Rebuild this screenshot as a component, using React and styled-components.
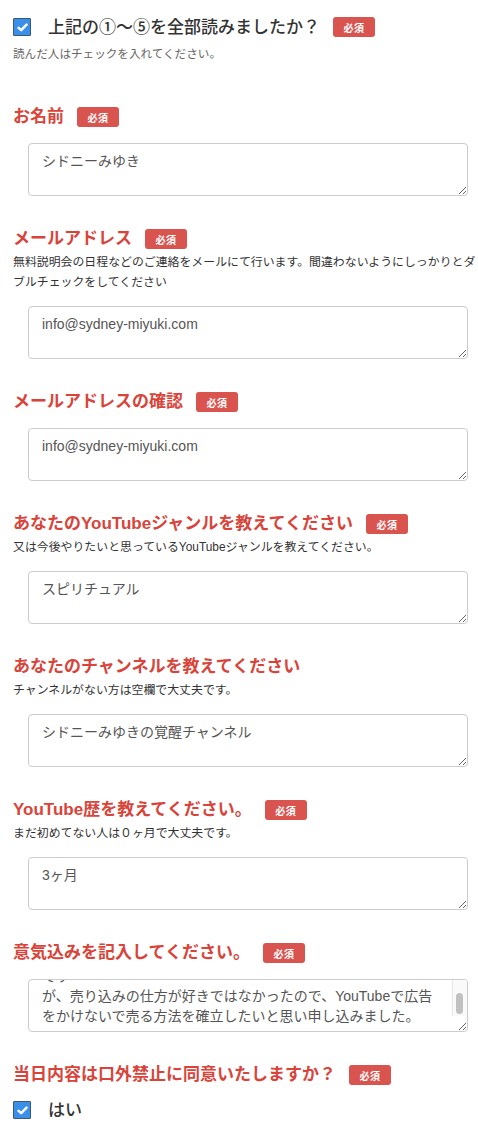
import React, { useEffect, useRef } from 'react';
import styled, { createGlobalStyle } from 'styled-components';

const GlobalStyle = createGlobalStyle`
  html, body {
    margin: 0;
    padding: 0;
    background: #fff;
  }
  body {
    font-family: "Liberation Sans", "Noto Sans CJK JP", sans-serif;
    color: #333;
  }
`;

const motivation =
  '以前から他のYouTubeコンサルタントの講座を検討していたのです\n' +
  'が、売り込みの仕方が好きではなかったので、YouTubeで広告\n' +
  'をかけないで売る方法を確立したいと思い申し込みました。';

const fields = [
  { title: 'お名前', required: true, value: 'シドニーみゆき' },
  {
    title: 'メールアドレス',
    required: true,
    desc: '無料説明会の日程などのご連絡をメールにて行います。間違わないようにしっかりとダブルチェックをしてください',
    value: 'info@sydney-miyuki.com',
  },
  { title: 'メールアドレスの確認', required: true, value: 'info@sydney-miyuki.com' },
  {
    title: 'あなたのYouTubeジャンルを教えてください',
    required: true,
    desc: '又は今後やりたいと思っているYouTubeジャンルを教えてください。',
    value: 'スピリチュアル',
  },
  {
    title: 'あなたのチャンネルを教えてください',
    desc: 'チャンネルがない方は空欄で大丈夫です。',
    value: 'シドニーみゆきの覚醒チャンネル',
  },
  {
    title: 'YouTube歴を教えてください。',
    required: true,
    desc: 'まだ初めてない人は０ヶ月で大丈夫です。',
    value: '3ヶ月',
  },
  { title: '意気込みを記入してください。', required: true, value: motivation, scrolled: true },
];

const Check = () => (
  <CheckBox>
    <svg width="11" height="9" viewBox="0 0 11 9">
      <path d="M1.5 4.8 L4.2 7.2 L9.6 1.6" fill="none" stroke="#fff" strokeWidth="2.4" strokeLinecap="round" strokeLinejoin="round" />
    </svg>
  </CheckBox>
);

const Field = ({ title, required, desc, value, scrolled, first }) => {
  const ref = useRef(null);
  useEffect(() => {
    if (scrolled && ref.current) ref.current.scrollTop = ref.current.scrollHeight;
  }, [scrolled]);
  return (
    <FieldBlock $first={first}>
      <TitleRow>
        <Title>{title}</Title>
        {required && <Badge>必須</Badge>}
      </TitleRow>
      {desc && <Desc>{desc}</Desc>}
      <BoxWrap>
        <TextBox ref={ref} defaultValue={value} $scroll={scrolled} />
        {scrolled && (
          <ScrollTrack>
            <ScrollThumb />
          </ScrollTrack>
        )}
      </BoxWrap>
    </FieldBlock>
  );
};

export default function App() {
  return (
    <Page>
      <GlobalStyle />
      <CheckRow>
        <Check />
        <Question>上記の①〜⑤を全部読みましたか？</Question>
        <Badge>必須</Badge>
      </CheckRow>
      <Note>読んだ人はチェックを入れてください。</Note>

      {fields.map((f, i) => (
        <Field key={f.title} first={i === 0} {...f} />
      ))}

      <FieldBlock>
        <TitleRow>
          <Title>当日内容は口外禁止に同意いたしますか？</Title>
          <Badge>必須</Badge>
        </TitleRow>
        <CheckRow $top={11}>
          <Check />
          <Question>はい</Question>
        </CheckRow>
      </FieldBlock>
    </Page>
  );
}

const Page = styled.div`
  padding: 15px 0 17px 13px;
  width: 478px;
  box-sizing: border-box;
`;

const CheckRow = styled.div`
  display: flex;
  align-items: center;
  height: 24px;
  margin-top: ${(p) => p.$top || 0}px;
`;

const CheckBox = styled.span`
  width: 18px;
  height: 18px;
  box-sizing: border-box;
  flex-shrink: 0;
  display: flex;
  align-items: center;
  justify-content: center;
  background: #3a8fe8;
  border: 1px solid #3d5874;
  border-radius: 1px;
  margin-right: 17px;
`;

const Question = styled.span`
  font-size: 17px;
  font-weight: 500;
  color: #333;
  line-height: 24px;
  padding-top: 2px;
`;

const Note = styled.div`
  margin-top: 5px;
  font-size: 11.6px;
  line-height: 20px;
  color: #666;
`;

const FieldBlock = styled.div`
  margin-top: ${(p) => (p.$first ? 41 : 31)}px;
`;

const TitleRow = styled.div`
  display: flex;
  align-items: center;
  height: 24px;
  margin-bottom: 1px;
`;

const Title = styled.h3`
  margin: 0;
  font-size: 17px;
  font-weight: 700;
  color: #d9443a;
  line-height: 24px;
  white-space: nowrap;
`;

const Badge = styled.span`
  display: inline-flex;
  align-items: center;
  justify-content: center;
  width: 42px;
  height: 20px;
  margin-left: 13px;
  border-radius: 3px;
  background: #d9534f;
  color: #fff;
  font-size: 10px;
  font-weight: 700;
  letter-spacing: 0.5px;
`;

const Desc = styled.div`
  font-size: 11.9px;
  line-height: 20px;
  color: #333;
`;

const BoxWrap = styled.div`
  position: relative;
  width: 440px;
  margin: 14px 0 0 15px;
`;

const TextBox = styled.textarea`
  display: block;
  box-sizing: border-box;
  width: 440px;
  height: 53px;
  margin: 0;
  padding: ${(p) => (p.$scroll ? '6px 28px 5px 13px' : '7px 13px 6px')};
  border: 1px solid #cccccc;
  border-radius: 4px;
  font-family: "Liberation Sans", "Noto Sans CJK JP", sans-serif;
  font-size: 14px;
  line-height: 20px;
  color: #555;
  background: #fff;
  outline: none;
  overflow: hidden;
`;

const ScrollTrack = styled.div`
  position: absolute;
  top: 1px;
  right: 1px;
  width: 14px;
  height: 36px;
  background: #fafafa;
  border-left: 1px solid #e6e6e6;
  border-top-right-radius: 3px;
  pointer-events: none;
`;

const ScrollThumb = styled.div`
  position: absolute;
  left: 3px;
  top: 13px;
  width: 7px;
  height: 21px;
  border-radius: 4px;
  background: #c1c1c1;
`;
